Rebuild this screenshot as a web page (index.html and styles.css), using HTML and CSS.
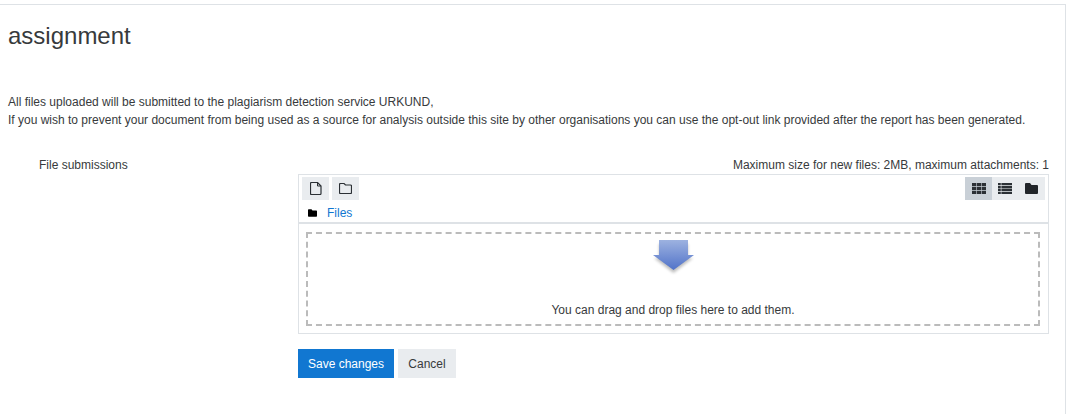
FILE: index.html
```html
<!DOCTYPE html>
<html lang="en">
<head>
<meta charset="utf-8">
<title>assignment</title>
<link rel="stylesheet" href="styles.css">
</head>
<body>
<main class="card">
  <h2 class="title">assignment</h2>
  <div class="notice">
    <p>All files uploaded will be submitted to the plagiarism detection service URKUND,</p>
    <p>If you wish to prevent your document from being used as a source for analysis outside this site by other organisations you can use the opt-out link provided after the report has been generated.</p>
  </div>
  <form class="form">
    <div class="label">File submissions</div>
    <div class="field">
      <div class="limits">Maximum size for new files: 2MB, maximum attachments: 1</div>
      <div class="picker">
        <div class="toolbar">
          <div class="actions">
            <button type="button" class="tool" aria-label="Add file">
              <svg width="12" height="13" viewBox="0 0 12 13"><path d="M1.500.5h6l3.500 3.500v7.500q0 1-1 1h-8.500q-1 0-1-1V1.500q0-1 1-1z" fill="none" stroke="#2b3035" stroke-width="1.200"/><path d="M7.500.5V4h3.500" fill="none" stroke="#2b3035"/></svg>
            </button>
            <button type="button" class="tool" aria-label="Create folder">
              <svg width="13" height="11" viewBox="0 0 13 11"><path d="M1.500.5h3.500l1.500 1.500h5q1 0 1 1v6.500q0 1-1 1h-10q-1 0-1-1v-8q0-1 1-1z" fill="none" stroke="#2b3035" stroke-width="1.200"/></svg>
            </button>
          </div>
          <div class="views">
            <button type="button" class="view active" aria-label="Icons">
              <svg width="14" height="11" viewBox="0 0 14 11"><path d="M0 0h4.300v3.300H0zM4.900 0h4.200v3.300H4.900zM9.700 0H14v3.300H9.700zM0 3.900h4.300v3.200H0zM4.900 3.900h4.200v3.200H4.900zM9.700 3.900H14v3.200H9.700zM0 7.700h4.300V11H0zM4.900 7.700h4.200V11H4.900zM9.700 7.700H14V11H9.700z" fill="#2b3035"/></svg>
            </button>
            <button type="button" class="view list" aria-label="List">
              <svg width="14" height="11" viewBox="0 0 14 11"><path d="M0 0h2.800v2.300H0zM3.400 0H14v2.300H3.400zM0 2.900h2.800v2.300H0zM3.400 2.900H14v2.300H3.400zM0 5.800h2.800v2.300H0zM3.400 5.800H14v2.300H3.400zM0 8.700h2.800V11H0zM3.400 8.700H14V11H3.400z" fill="#2b3035"/></svg>
            </button>
            <button type="button" class="view" aria-label="Tree">
              <svg width="13" height="11" viewBox="0 0 13 11"><path d="M1 0h4l1.500 2H12q1 0 1 1v7q0 1-1 1H1q-1 0-1-1V1q0-1 1-1z" fill="#212529"/></svg>
            </button>
          </div>
        </div>
        <div class="path">
          <svg class="path-icon" width="9" height="8" viewBox="0 0 13 11"><path d="M1 0h4l1.500 2H12q1 0 1 1v7q0 1-1 1H1q-1 0-1-1V1q0-1 1-1z" fill="#000"/></svg>
          <a href="#" class="path-link">Files</a>
        </div>
        <div class="drop-wrap">
          <div class="drop">
            <svg class="arrow" width="46" height="37" viewBox="0 0 46 37">
              <defs>
                <linearGradient id="arrowFill" x1="0" y1="0" x2="0" y2="1">
                  <stop offset="0" stop-color="#9db2e0"/>
                  <stop offset="1" stop-color="#5173c9"/>
                </linearGradient>
                <filter id="arrowShadow" x="-20%" y="-20%" width="140%" height="150%">
                  <feGaussianBlur stdDeviation="1.800"/>
                </filter>
              </defs>
              <path d="M9 5H38V19H43L23.500 34 4 19H9z" fill="#000" opacity=".25" filter="url(#arrowShadow)"/>
              <path d="M9 1H38V16H44L23.500 31 3 16H9z" fill="url(#arrowFill)"/>
            </svg>
            <div class="drop-text">You can drag and drop files here to add them.</div>
          </div>
        </div>
      </div>
      <div class="buttons">
        <button type="button" class="btn primary">Save changes</button>
        <button type="button" class="btn secondary">Cancel</button>
      </div>
    </div>
  </form>
</main>
</body>
</html>
```

FILE: styles.css
```css
* { box-sizing: border-box; }
html, body { margin: 0; height: 100%; }
body {
  background: #fff;
  color: #373a3c;
  font-family: "Liberation Sans", Arial, sans-serif;
  font-size: 12px;
  line-height: 18px;
  padding-top: 4px;
  overflow: hidden;
}
.card {
  width: 1066px;
  height: 410px;
  border-top: 1px solid #dee2e6;
  border-right: 1px solid #dee2e6;
  padding: 16px 8px 0;
}
.title {
  margin: 0;
  font-size: 24px;
  font-weight: 400;
  line-height: 29px;
  color: #373a3c;
}
.notice { margin-top: 43px; }
.notice p { margin: 0; }
.form {
  display: flex;
  margin-top: 27px;
}
.label {
  width: 290px;
  padding-left: 31px;
  flex: none;
}
.field {
  width: 751px;
  flex: none;
}
.limits { text-align: right; height: 18px; }
.picker {
  border: 1px solid #dee2e6;
  height: 160px;
  display: flex;
  flex-direction: column;
}
.toolbar {
  display: flex;
  justify-content: space-between;
  padding: 2px 3px 0;
}
.actions { display: flex; gap: 3px; }
.tool, .view {
  border: 0;
  padding: 0;
  height: 23px;
  background: #e9ecef;
  display: flex;
  align-items: center;
  justify-content: center;
}
.tool { width: 27px; }
.views { display: flex; }
.view { width: 27px; }
.view.list { width: 26px; }
.view.active { background: #c9d0d7; }
.path {
  display: flex;
  align-items: center;
  height: 18px;
  margin-top: 4px;
  padding-left: 9px;
}
.path-icon { margin-right: 10px; }
.path-link { color: #1177d1; text-decoration: none; }
.drop-wrap {
  border-top: 2px solid #dee2e6;
  flex: 1;
  padding: 8px 8px 8px 7px;
}
.drop {
  border: 2px dashed #bbb;
  height: 94px;
  display: flex;
  flex-direction: column;
  align-items: center;
}
.arrow { margin-top: 5px; display: block; }
.drop-text { margin-top: 25px; }
.buttons {
  display: flex;
  gap: 4px;
  margin-top: 15px;
}
.btn {
  border: 0;
  height: 29px;
  font: inherit;
  padding: 0;
  white-space: nowrap;
}
.primary { background: #1177d1; color: #fff; width: 96px; }
.secondary { background: #e9ecef; color: #373a3c; width: 58px; }
```
